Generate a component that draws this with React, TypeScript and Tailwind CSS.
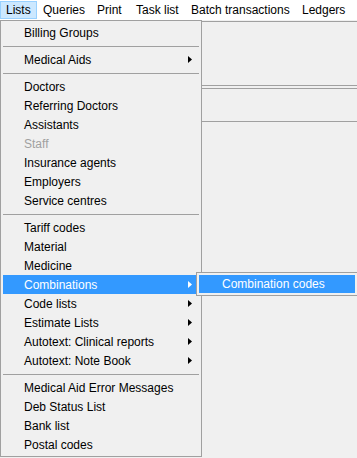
import React from "react";

type Item =
  | { kind: "sep" }
  | { kind: "item"; label: string; sub?: boolean; disabled?: boolean; active?: boolean };

const items: Item[] = [
  { kind: "item", label: "Billing Groups" },
  { kind: "sep" },
  { kind: "item", label: "Medical Aids", sub: true },
  { kind: "sep" },
  { kind: "item", label: "Doctors" },
  { kind: "item", label: "Referring Doctors" },
  { kind: "item", label: "Assistants" },
  { kind: "item", label: "Staff", disabled: true },
  { kind: "item", label: "Insurance agents" },
  { kind: "item", label: "Employers" },
  { kind: "item", label: "Service centres" },
  { kind: "sep" },
  { kind: "item", label: "Tariff codes" },
  { kind: "item", label: "Material" },
  { kind: "item", label: "Medicine" },
  { kind: "item", label: "Combinations", sub: true, active: true },
  { kind: "item", label: "Code lists", sub: true },
  { kind: "item", label: "Estimate Lists", sub: true },
  { kind: "item", label: "Autotext: Clinical reports", sub: true },
  { kind: "item", label: "Autotext: Note Book", sub: true },
  { kind: "sep" },
  { kind: "item", label: "Medical Aid Error Messages" },
  { kind: "item", label: "Deb Status List" },
  { kind: "item", label: "Bank list" },
  { kind: "item", label: "Postal codes" },
];

function Arrow({ white }: { white?: boolean }) {
  return (
    <svg width="4" height="7" viewBox="0 0 4 7" className="block">
      <path d="M0 0 L4 3.5 L0 7 Z" fill={white ? "#ffffff" : "#000000"} />
    </svg>
  );
}

export default function App() {
  const font = { fontFamily: '"Liberation Sans", Arial, sans-serif' };
  return (
    <div
      className="relative w-[357px] h-[458px] overflow-hidden bg-[#f0f0f0] text-[12px] text-black"
      style={font}
    >
      {/* menu bar */}
      <div className="h-[20px] bg-white flex items-stretch">
        <div className="mt-[1px] h-[18px] w-[37px] flex items-center bg-[#cce8ff] border border-[#99d1ff] pl-[5px]">
          Lists
        </div>
        <div className="w-[54px] pl-[6px] flex items-center">Queries</div>
        <div className="w-[39px] pl-[6px] flex items-center">Print</div>
        <div className="w-[55px] pl-[6px] flex items-center">Task list</div>
        <div className="w-[111px] pl-[6px] flex items-center">Batch transactions</div>
        <div className="w-[53px] pl-[6px] flex items-center">Ledgers</div>
      </div>
      {/* background window content */}
      <div className="mt-[1px] h-[1px] bg-[#a0a0a0]" />
      <div className="mt-[63px] h-[1px] bg-[#a0a0a0]" />
      <div className="mt-[2px] h-[1px] bg-[#a0a0a0]" />
      <div className="mt-[32px] h-[1px] bg-[#a0a0a0]" />

      {/* dropdown menu */}
      <div className="absolute left-0 top-[20px] w-[202px] h-[437px] border border-[#a0a0a0] bg-[#f0f0f0] p-[2px] flex flex-col">
        {items.map((it, i) =>
          it.kind === "sep" ? (
            <div key={i} className="h-[8px] flex items-center">
              <div className="w-full h-[1px] bg-[#a0a0a0]" />
            </div>
          ) : (
            <div
              key={i}
              className={
                "h-[19px] shrink-0 flex items-center pl-[21px] pr-[7px] " +
                (it.active ? "bg-[#3399ff] text-white " : "") +
                (it.disabled ? "text-[#a0a0a0] " : "")
              }
            >
              <span className="flex-1 leading-none">{it.label}</span>
              {it.sub && <Arrow white={it.active} />}
            </div>
          )
        )}
      </div>

      {/* submenu */}
      <div className="absolute left-[196px] top-[272px] w-[162px] h-[24px] border border-[#a0a0a0] bg-[#f0f0f0] p-[2px]">
        <div className="h-[18px] bg-[#3399ff] text-white flex items-center pl-[23px] leading-none">
          Combination codes
        </div>
      </div>
    </div>
  );
}
